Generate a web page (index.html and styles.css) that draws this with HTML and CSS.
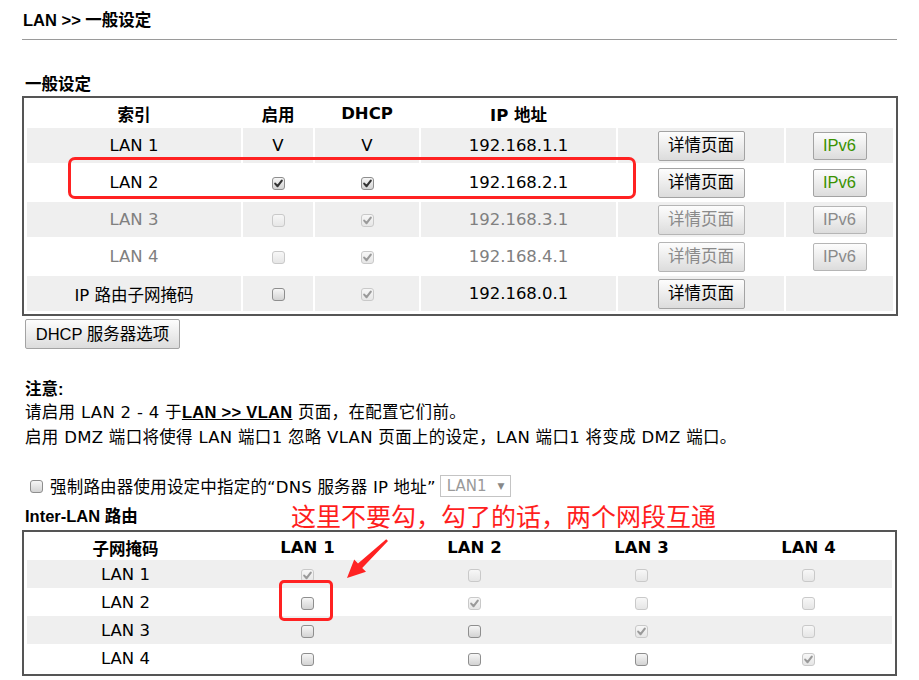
FILE: index.html
```html
<!DOCTYPE html>
<html>
<head>
<meta charset="utf-8">
<title>LAN 一般设定</title>
<link rel="stylesheet" href="styles.css">
</head>
<body>
<div class="page">
  <h1 class="title">LAN &gt;&gt; 一般设定</h1>
  <div class="rule"></div>
  <h2 class="section">一般设定</h2>
  <table class="lan">
    <colgroup>
      <col class="w1"><col class="w2"><col class="w3"><col class="w4"><col class="w5"><col class="w6">
    </colgroup>
    <tr>
      <th>索引</th><th>启用</th><th>DHCP</th><th>IP 地址</th><th></th><th></th>
    </tr>
    <tr class="g">
      <td>LAN 1</td><td>V</td><td>V</td><td>192.168.1.1</td>
      <td><button class="btn det">详情页面</button></td>
      <td><button class="btn v6">IPv6</button></td>
    </tr>
    <tr>
      <td>LAN 2</td>
      <td><span class="cb"><svg viewBox="0 0 13 13"><path d="M3.2 6.6 L5.6 9.2 L9.8 3.6"/></svg></span></td>
      <td><span class="cb"><svg viewBox="0 0 13 13"><path d="M3.2 6.6 L5.6 9.2 L9.8 3.6"/></svg></span></td>
      <td>192.168.2.1</td>
      <td><button class="btn det">详情页面</button></td>
      <td><button class="btn v6">IPv6</button></td>
    </tr>
    <tr class="g off">
      <td>LAN 3</td>
      <td><span class="cb dis"></span></td>
      <td><span class="cb dis"><svg viewBox="0 0 13 13"><path d="M3.2 6.6 L5.6 9.2 L9.8 3.6"/></svg></span></td>
      <td>192.168.3.1</td>
      <td><button class="btn det dim">详情页面</button></td>
      <td><button class="btn v6 dim">IPv6</button></td>
    </tr>
    <tr class="off">
      <td>LAN 4</td>
      <td><span class="cb dis"></span></td>
      <td><span class="cb dis"><svg viewBox="0 0 13 13"><path d="M3.2 6.6 L5.6 9.2 L9.8 3.6"/></svg></span></td>
      <td>192.168.4.1</td>
      <td><button class="btn det dim">详情页面</button></td>
      <td><button class="btn v6 dim">IPv6</button></td>
    </tr>
    <tr class="g">
      <td>IP 路由子网掩码</td>
      <td><span class="cb"></span></td>
      <td><span class="cb dis"><svg viewBox="0 0 13 13"><path d="M3.2 6.6 L5.6 9.2 L9.8 3.6"/></svg></span></td>
      <td>192.168.0.1</td>
      <td><button class="btn det">详情页面</button></td>
      <td></td>
    </tr>
  </table>
  <button class="btn dhcp">DHCP 服务器选项</button>

  <div class="note-title">注意:</div>
  <div class="note">请启用 LAN 2 - 4 于<a class="link">LAN &gt;&gt; VLAN</a> 页面，在配置它们前。</div>
  <div class="note">启用 DMZ 端口将使得 LAN 端口1 忽略 VLAN 页面上的设定，LAN 端口1 将变成 DMZ 端口。</div>

  <div class="dns">
    <span class="cb"></span>
    <span class="dns-text">强制路由器使用设定中指定的“DNS 服务器 IP 地址”</span>
    <span class="sel">LAN1<span class="arr">▼</span></span>
  </div>

  <h2 class="section inter">Inter-LAN 路由</h2>
  <table class="inter-t">
    <colgroup>
      <col class="i1"><col class="i2"><col class="i2"><col class="i2"><col class="i2">
    </colgroup>
    <tr>
      <th>子网掩码</th><th>LAN 1</th><th>LAN 2</th><th>LAN 3</th><th>LAN 4</th>
    </tr>
    <tr class="g">
      <td>LAN 1</td>
      <td><span class="cb dis"><svg viewBox="0 0 13 13"><path d="M3.2 6.6 L5.6 9.2 L9.8 3.6"/></svg></span></td>
      <td><span class="cb dis"></span></td>
      <td><span class="cb dis"></span></td>
      <td><span class="cb dis"></span></td>
    </tr>
    <tr>
      <td>LAN 2</td>
      <td><span class="cb"></span></td>
      <td><span class="cb dis"><svg viewBox="0 0 13 13"><path d="M3.2 6.6 L5.6 9.2 L9.8 3.6"/></svg></span></td>
      <td><span class="cb dis"></span></td>
      <td><span class="cb dis"></span></td>
    </tr>
    <tr class="g">
      <td>LAN 3</td>
      <td><span class="cb"></span></td>
      <td><span class="cb"></span></td>
      <td><span class="cb dis"><svg viewBox="0 0 13 13"><path d="M3.2 6.6 L5.6 9.2 L9.8 3.6"/></svg></span></td>
      <td><span class="cb dis"></span></td>
    </tr>
    <tr>
      <td>LAN 4</td>
      <td><span class="cb"></span></td>
      <td><span class="cb"></span></td>
      <td><span class="cb"></span></td>
      <td><span class="cb dis"><svg viewBox="0 0 13 13"><path d="M3.2 6.6 L5.6 9.2 L9.8 3.6"/></svg></span></td>
    </tr>
  </table>

  <div class="mark mark-row"></div>
  <div class="mark mark-cb"></div>
  <div class="annot">这里不要勾，勾了的话，两个网段互通</div>
  <svg class="arrow" viewBox="0 0 919 680" width="919" height="680">
    <polygon points="386.2,539.2 388,541 362.2,567.9 366,571.8 347,578 354.2,559.6 358,563.4"/>
  </svg>
</div>
</body>
</html>
```

FILE: styles.css
```css
html, body {
  margin: 0;
  padding: 0;
  background: #fff;
}

body {
  font-family: "DejaVu Sans", "Noto Sans CJK SC", sans-serif;
  font-size: 16.5px;
  color: #000;
}

.page {
  position: relative;
  width: 919px;
  height: 680px;
  overflow: hidden;
  padding-left: 22px;
  box-sizing: border-box;
}

.title {
  margin: 0;
  padding: 10px 0 0 1px;
  font: bold 16.5px/20px "Liberation Sans", "Noto Sans CJK SC", sans-serif;
}

.rule {
  width: 875px;
  height: 1px;
  background: #9a9a9a;
  margin-top: 9px;
}

.section {
  margin: 34px 0 0;
  padding-left: 3px;
  font: bold 16.5px/20px "Liberation Sans", "Noto Sans CJK SC", sans-serif;
}

/* ---------- table 1 ---------- */
.lan {
  margin-top: 2px;
  width: 876px;
  table-layout: fixed;
  border: 2px solid #555;
  border-spacing: 2px;
  padding: 1px;
}

.lan .w1 { width: 214px; }
.lan .w2 { width: 70px; }
.lan .w3 { width: 104px; }
.lan .w4 { width: 195px; }
.lan .w5 { width: 166px; }
.lan .w6 { width: 107px; }

.lan th {
  height: 25px;
  padding: 0;
  font-weight: bold;
  text-align: center;
  vertical-align: middle;
}

.lan td {
  height: 35px;
  padding: 0;
  text-align: center;
  vertical-align: middle;
}

tr.g td {
  background: #efefef;
}

tr.off td {
  color: #808080;
}

/* ---------- buttons ---------- */
.btn {
  font: 16.5px/1 "Liberation Sans", "Noto Sans CJK SC", sans-serif;
  color: #000;
  background: linear-gradient(#fdfdfd, #dcdcdc);
  border: 1px solid #a3a3a3;
  border-radius: 2px;
  padding: 0;
  margin: 0;
  vertical-align: middle;
}

.det {
  width: 87px;
  height: 30px;
}

.v6 {
  width: 54px;
  height: 28px;
  color: #3a9200;
}

.btn.dim {
  color: #8a8a8a;
  border-color: #b5b5b5;
}

.dhcp {
  display: block;
  width: 155px;
  height: 30px;
  margin: 3px 0 0 3px;
}

/* ---------- checkboxes ---------- */
.cb {
  display: inline-block;
  width: 13px;
  height: 13px;
  box-sizing: border-box;
  border: 1px solid #8e8e8e;
  border-radius: 3px;
  background: linear-gradient(#f6f6f6, #d3d3d3);
  vertical-align: middle;
  position: relative;
}

.cb svg {
  position: absolute;
  left: -1px;
  top: -1px;
  width: 13px;
  height: 13px;
}

.cb svg path {
  fill: none;
  stroke: #333;
  stroke-width: 2.1;
  stroke-linecap: round;
  stroke-linejoin: round;
}

.cb.dis {
  border-color: #c9c9c9;
  background: linear-gradient(#f7f7f7, #e6e6e6);
}

.cb.dis svg path {
  stroke: #9a9a9a;
}

/* ---------- note ---------- */
.note-title {
  margin-top: 30px;
  padding-left: 3px;
  font: bold 16.5px/21px "Liberation Sans", "Noto Sans CJK SC", sans-serif;
}

.note {
  padding-left: 3px;
  line-height: 25px;
  letter-spacing: 0.3px;
}

.link {
  font-family: "Liberation Sans", "Noto Sans CJK SC", sans-serif;
  font-weight: bold;
  text-decoration: underline;
  color: #000;
}

/* ---------- dns row ---------- */
.dns {
  display: flex;
  align-items: center;
  height: 24px;
  margin-top: 24px;
}

.dns .cb {
  margin-left: 8px;
}

.dns-text {
  margin-left: 7px;
  letter-spacing: 0.2px;
}

.sel {
  margin-left: 4px;
  width: 71px;
  height: 22px;
  box-sizing: border-box;
  border: 1px solid #c4c4c4;
  background: #fff;
  color: #9a9a9a;
  font-size: 15px;
  line-height: 20px;
  padding-left: 6px;
  display: flex;
  align-items: center;
}

.sel .arr {
  font-size: 9px;
  margin-left: 11px;
  color: #888;
}

.section.inter {
  margin-top: 8px;
}

/* ---------- table 2 ---------- */
.inter-t {
  margin-top: 4px;
  width: 875px;
  table-layout: fixed;
  border: 2px solid #555;
  border-spacing: 0;
  padding: 3px 3px 2px;
}

.inter-t .i1 { width: 197px; }
.inter-t .i2 { width: 167px; }

.inter-t th {
  height: 25px;
  padding: 0;
  font-weight: bold;
  text-align: center;
  vertical-align: middle;
}

.inter-t td {
  height: 28px;
  padding: 0;
  text-align: center;
  vertical-align: middle;
}

/* ---------- annotations ---------- */
.mark {
  position: absolute;
  border: 3px solid #ff2222;
  box-sizing: border-box;
}

.mark-row {
  left: 68px;
  top: 157px;
  width: 568px;
  height: 42px;
  border-radius: 7px;
}

.mark-cb {
  left: 279px;
  top: 580px;
  width: 54px;
  height: 41px;
  border-radius: 5px;
}

.annot {
  position: absolute;
  left: 291px;
  top: 502px;
  font: 25px/27px "Noto Sans CJK SC", sans-serif;
  color: #ff1e1e;
  white-space: nowrap;
}

.arrow {
  position: absolute;
  left: 0;
  top: 0;
  pointer-events: none;
}

.arrow polygon {
  fill: #ff2222;
}
```
